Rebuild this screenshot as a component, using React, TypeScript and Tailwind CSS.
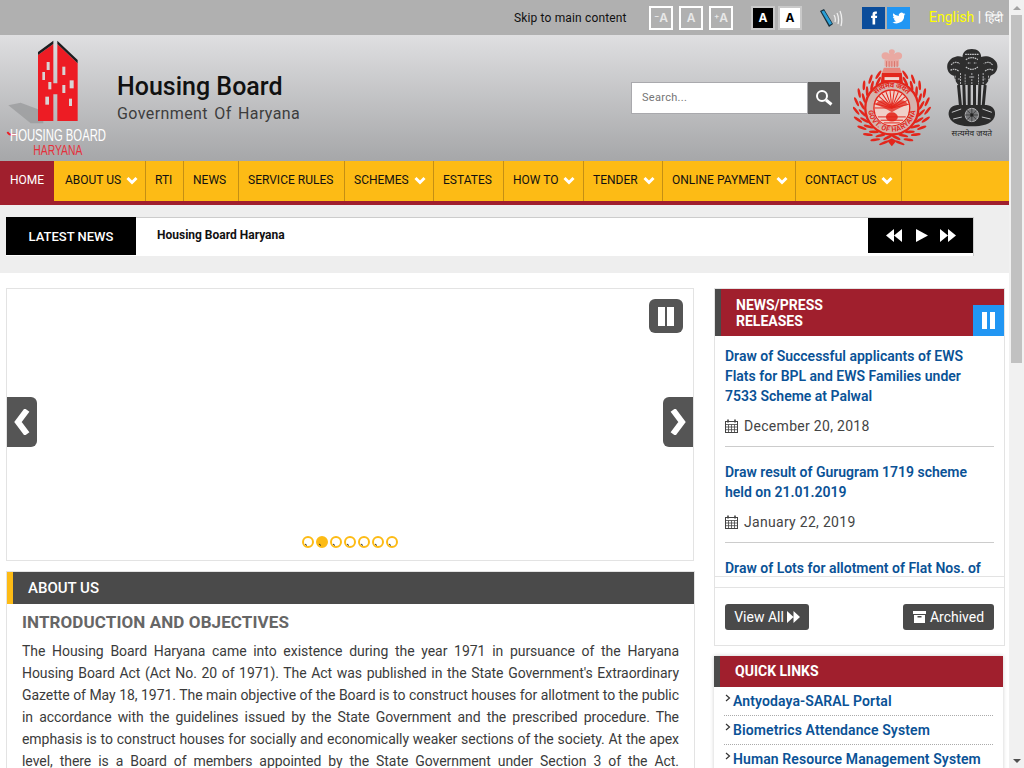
import React from 'react';

const menu = [
  { label: 'ABOUT US', w: 'w-[92px] pl-[11px]', sub: true },
  { label: 'RTI', w: 'w-[38px] pl-[9px]' },
  { label: 'NEWS', w: 'w-[55px] pl-[9px]' },
  { label: 'SERVICE RULES', w: 'w-[106px] pl-[9px]' },
  { label: 'SCHEMES', w: 'w-[89px] pl-[9px]', sub: true },
  { label: 'ESTATES', w: 'w-[70px] pl-[9px]' },
  { label: 'HOW TO', w: 'w-[80px] pl-[9px]', sub: true },
  { label: 'TENDER', w: 'w-[79px] pl-[9px]', sub: true },
  { label: 'ONLINE PAYMENT', w: 'w-[133px] pl-[9px]', sub: true },
  { label: 'CONTACT US', w: 'w-[106px] pl-[9px]', sub: true },
];

const Chevron = () => (
  <svg width="12" height="9" viewBox="0 0 12 9" className="ml-[5px] shrink-0">
    <path d="M1.500 2 L6 6.500 L10.500 2" fill="none" stroke="#fff" strokeWidth="3" />
  </svg>
);

// logo drawn in 3x units so it lines up with the crop of the reference
const Logo = () => (
  <svg width="115" height="125" viewBox="0 0 345 375">
    <polygon points="25,208 62,200 130,226 130,262 92,262" fill="#98999b" opacity="0.75" />
    <polygon points="114,57 160,24 160,142 172,142 172,24 233,82 233,255 172,255 172,175 160,175 160,255 114,255" fill="#ed1c24" />
    <path d="M114 48 L160 14 L160 24 L114 57 Z M172 14 L233 72 L233 82 L172 24 Z" fill="#1d1d1f" />
    {[[140, 78, 9, 24], [127, 108, 8, 24], [145, 138, 9, 22], [187, 92, 9, 25], [187, 147, 9, 24], [209, 133, 12, 24], [136, 182, 11, 24], [207, 188, 9, 22]].map(([x, y, w, h]) => (
      <rect key={x + y} x={x} y={y} width={w} height={h} fill="#d9d4d4" />
    ))}
    <path d="M22 288 Q28 298 38 296 L50 296" fill="none" stroke="#ed1c24" strokeWidth="5" />
    <text x="30" y="315" fontFamily="Liberation Sans, sans-serif" fontSize="50" fill="#fff" textLength="288" lengthAdjust="spacingAndGlyphs">HOUSING BOARD</text>
    <text x="100" y="357" fontFamily="Liberation Sans, sans-serif" fontSize="42" fill="#e5303a" textLength="147" lengthAdjust="spacingAndGlyphs">HARYANA</text>
  </svg>
);

const HaryanaEmblem = () => {
  const cx = 142;
  const cy = 205;
  const angles = Array.from({ length: 11 }, (_, i) => 8 + i * 14.5);
  const leaf = (a: number, side: number, r: number, key: string) => {
    const t = (a * Math.PI) / 180;
    const x = cx + side * r * Math.sin(t);
    const y = cy + r * Math.cos(t);
    return <ellipse key={key} cx={x} cy={y} rx="4" ry="15" fill="#e3261c" transform={`rotate(${side * (90 - a) + side * 35} ${x} ${y})`} />;
  };
  return (
    <svg width="78" height="98" viewBox="25 28 235 294">
      <g fill="#e9a9a2">
        <ellipse cx="142" cy="36" rx="9" ry="8" />
        <ellipse cx="123" cy="48" rx="12" ry="11" />
        <ellipse cx="161" cy="48" rx="12" ry="11" />
        <ellipse cx="142" cy="52" rx="15" ry="12" />
        <rect x="120" y="58" width="44" height="22" rx="4" />
      </g>
      <path d="M126 64 V82 M134 64 V82 M142 64 V82 M150 64 V82 M158 64 V82" stroke="#d9776e" strokeWidth="3" />
      <path d="M118 84 H166 L172 100 H112 Z" fill="#e8867c" />
      <path d="M112 100 H172 L176 136 H108 Z" fill="#e3261c" />
      <rect x="120" y="112" width="44" height="9" fill="#f0d5d0" />
      {angles.map(a => leaf(a, -1, 90, `a${a}`))}
      {angles.map(a => leaf(a, 1, 90, `b${a}`))}
      {angles.map(a => leaf(a + 5, -1, 108, `c${a}`))}
      {angles.map(a => leaf(a + 5, 1, 108, `d${a}`))}
      <path d="M142 320 L128 304 L142 296 L156 304 Z" fill="#e3261c" />
      <circle cx={cx} cy={cy} r="80" fill="#d5b3ad" stroke="#e3261c" strokeWidth="7" />
      <circle cx={cx} cy={cy} r="54" fill="#f0cfc8" stroke="#e3261c" strokeWidth="4" />
      {[0, 14, 28, 42, 56, 70, 84, 98, 112, 126, 140, 154, 168].map(d => (
        <path key={d} d="M142 205 L90 205" stroke="#e3261c" strokeWidth="3" transform={`rotate(${d} 142 205)`} />
      ))}
      <path d="M92 222 H192 Q180 256 142 258 Q104 256 92 222 Z" fill="#f0cfc8" />
      <path d="M100 232 H184 M108 242 H176 M118 250 H166" stroke="#e3261c" strokeWidth="3" />
      <ellipse cx="142" cy="232" rx="18" ry="14" fill="#e3261c" opacity="0.9" />
      <path d="M92 195 Q115 165 142 205 Q169 165 192 195 Q170 200 142 218 Q114 200 92 195 Z" fill="#e3261c" opacity="0.75" />
      <defs>
        <path id="hry-bottom" d="M76 205 A66 66 0 0 0 208 205" />
        <path id="hry-top" d="M74 205 A68 68 0 0 1 210 205" />
      </defs>
      <text fontSize="21" fontWeight="700" fill="#e3261c" fontFamily="Roboto, sans-serif">
        <textPath href="#hry-bottom" startOffset="50%" textAnchor="middle" dominantBaseline="middle">GOVT. OF HARYANA</textPath>
      </text>
      <text fontSize="22" fontWeight="700" fill="#e3261c" fontFamily="'Noto Sans', sans-serif">
        <textPath href="#hry-top" startOffset="50%" textAnchor="middle" dominantBaseline="middle">सत्यमेव जयते</textPath>
      </text>
    </svg>
  );
};

const IndiaEmblem = () => (
  <svg width="52" height="89" viewBox="303 28 155 267">
    {/* lions */}
    <path d="M380 28 C362 28 352 38 352 52 C340 46 318 50 308 70 C302 86 310 104 326 108 C330 122 334 130 340 136 L420 136 C428 128 432 120 436 108 C452 104 462 86 454 68 C444 50 420 46 408 52 C408 38 398 28 380 28 Z" fill="#2e2e2e" />
    <path d="M360 44 H400 M362 60 Q380 48 398 60 M362 82 Q380 96 398 82 M368 70 h8 M386 70 h8 M318 76 Q328 62 344 72 M442 76 Q432 62 416 72 M316 92 Q330 84 342 96 M444 92 Q430 84 418 96" fill="none" stroke="#c6c7c9" strokeWidth="3.500" strokeDasharray="5 2" />
    <path d="M330 108 V130 M346 100 V134 M360 104 V134 M380 100 V134 M400 104 V134 M414 100 V134 M430 108 V130 M372 112 h16 M338 118 h10 M412 118 h10" stroke="#c6c7c9" strokeWidth="2.500" strokeDasharray="6 3" />
    {/* legs */}
    <path d="M340 136 L346 200 M356 136 L358 200 M372 136 L372 200 M388 136 L388 200 M404 136 L402 200 M420 136 L414 200" stroke="#2a2a2a" strokeWidth="9" />
    {/* abacus */}
    <path d="M336 196 C316 198 306 214 312 232 C320 254 350 260 380 260 C410 260 440 254 448 232 C454 214 444 198 424 196 Z" fill="#2c2c2c" />
    <circle cx="380" cy="226" r="20" fill="#77787a" stroke="#c6c7c9" strokeWidth="2.500" />
    <circle cx="380" cy="226" r="5" fill="#222" />
    <path d="M380 206 V246 M360 226 H400 M366 212 L394 240 M394 212 L366 240" stroke="#222" strokeWidth="1.800" />
    <path d="M320 218 L348 208 M324 238 L350 232 M440 218 L412 208 M436 238 L410 232" stroke="#c6c7c9" strokeWidth="3" />
    <text x="380" y="288" fontSize="25" textAnchor="middle" fill="#222" fontFamily="'Noto Sans', sans-serif">सत्यमेव जयते</text>
  </svg>
);

const ABox = ({ prefix, dark, light }: { prefix?: string; dark?: boolean; light?: boolean }) => (
  <div
    className={`flex h-6 w-6 items-center justify-center border-2 text-[12px] font-['Inter',sans-serif] ${
      dark
        ? 'border-[#c9c9c9] bg-black font-bold text-white'
        : light
          ? 'border-[#c9c9c9] bg-white font-bold text-black'
          : 'border-white font-semibold text-[#e8e8e8]'
    }`}
  >
    {prefix && <span className="mb-[4px] text-[8px] leading-none">{prefix}</span>}
    A
  </div>
);

const PhoneWave = () => (
  <svg width="23" height="18" viewBox="0 0 23 18">
    <polygon points="0,2 4,0 13,15 9,18" fill="#17313f" />
    <polygon points="1.500,2.500 4,1.500 12,14.500 9.500,16" fill="#2a9fd6" />
    <path d="M14 6 Q16 9 15 13 M17 4 Q19.500 9 18 15 M20 2 Q23 9 21 17" fill="none" stroke="#eee" strokeWidth="1.300" />
  </svg>
);

const Social = ({ bg, path }: { bg: string; path: string }) => (
  <div className={`flex h-[22px] w-[23px] items-center justify-center ${bg}`}>
    <svg width="14" height="14" viewBox="0 0 24 24" fill="#fff"><path d={path} /></svg>
  </div>
);

const Calendar = () => (
  <svg width="13" height="14" viewBox="0 0 13 14" className="mr-[6px] shrink-0" fill="none" stroke="#444" strokeWidth="1">
    <rect x="0.500" y="2.500" width="12" height="11" />
    <path d="M0.500 5.500 H12.500 M0.500 8 H12.500 M0.500 10.700 H12.500 M3.500 5.500 V13.500 M6.500 5.500 V13.500 M9.500 5.500 V13.500" strokeWidth="0.800" />
    <path d="M3 0.500 V3.500 M10 0.500 V3.500" strokeWidth="1.600" />
  </svg>
);

const Dot = ({ on }: { on?: boolean }) => (
  <svg width="12" height="12" viewBox="0 0 12 12">
    <circle cx="6" cy="6" r="5" fill={on ? '#fdbb15' : '#fff'} stroke="#fdbb15" strokeWidth="2" />
    <path d="M3 8 L5 9.500" stroke="#333" strokeWidth="1" />
  </svg>
);

const news = [
  { title: 'Draw of Successful applicants of EWS Flats for BPL and EWS Families under 7533 Scheme at Palwal', date: 'December 20, 2018' },
  { title: 'Draw result of Gurugram 1719 scheme held on 21.01.2019', date: 'January 22, 2019' },
  { title: 'Draw of Lots for allotment of Flat Nos. of', date: '' },
];

const links = ['Antyodaya-SARAL Portal', 'Biometrics Attendance System', 'Human Resource Management System'];

export default function App() {
  return (
    <div className="flex h-[768px] w-[1024px] overflow-hidden bg-white font-['Roboto',sans-serif]">
      <div className="w-[1009px] shrink-0">
        {/* top strip */}
        <div className="flex h-[35px] items-center bg-[#b0b0b0] pl-[514px]">
          <span className="mt-[1px] w-[135px] shrink-0 text-[12px] tracking-[0.15px] text-[#111]">Skip to main content</span>
          <div className="flex gap-[6px]"><ABox prefix="−" /><ABox /><ABox prefix="+" /></div>
          <div className="ml-[18px] flex gap-[3px]"><ABox dark /><ABox light /></div>
          <div className="ml-[18px] w-[42px] shrink-0"><PhoneWave /></div>
          <div className="flex gap-[2px]">
            <Social bg="bg-[#0b4d9b]" path="M14 8V6c0-1 .5-1.500 1.500-1.500H17V1h-3c-3 0-4.500 2-4.500 4.500V8H7v4h2.500v11H14V12h3l.5-4z" />
            <Social bg="bg-[#2196f3]" path="M23 5c-.8.4-1.700.6-2.600.8.900-.6 1.600-1.400 2-2.500-.9.500-1.900.9-2.900 1.100A4.600 4.600 0 0 0 11.600 8.600 13 13 0 0 1 2.200 3.800a4.600 4.600 0 0 0 1.400 6.100c-.7 0-1.400-.2-2-.6 0 2.200 1.600 4.100 3.700 4.600-.7.200-1.400.2-2.100.1.600 1.800 2.300 3.200 4.300 3.200A9.300 9.300 0 0 1 .7 19.100 13 13 0 0 0 20.800 7.500c.9-.6 1.700-1.500 2.200-2.500z" />
          </div>
          <div className="mb-[1px] ml-[19px] whitespace-nowrap text-[14px] leading-none text-white">
            <span className="text-[#ffff00]">English</span> | <span className="text-[12px]">हिंदी</span>
          </div>
        </div>

        {/* header */}
        <div className="flex h-[126px] items-center bg-gradient-to-b from-[#dfdfe1] to-[#a6a7a9]">
          <div className="w-[117px] shrink-0"><Logo /></div>
          <div className="w-[514px] shrink-0">
            <div className="text-[25px] font-medium leading-[32px] text-[#111]">Housing Board</div>
            <div className="text-[16px] leading-[22px] tracking-[0.4px] text-[#3d3d3d] [word-spacing:2px]">Government Of Haryana</div>
          </div>
          <div className="flex">
            <div className="flex h-8 w-[177px] items-center border border-[#a9a9ad] bg-white pl-[10px] pt-[1px] text-[11px] tracking-[0.3px] text-[#757575]">Search...</div>
            <div className="flex h-8 w-8 items-center justify-center bg-[#5d5d5d]">
              <svg width="18" height="18" viewBox="0 0 18 18" fill="none" stroke="#fff">
                <circle cx="7" cy="7" r="5" strokeWidth="2" />
                <path d="M11 11 L16.500 15.500" strokeWidth="3" />
              </svg>
            </div>
          </div>
          <div className="ml-[13px]"><HaryanaEmblem /></div>
          <div className="mb-[9px] ml-[15px]"><IndiaEmblem /></div>
        </div>

        {/* nav */}
        <nav className="flex h-[44px] border-b-4 border-[#a01f2d] bg-[#fdbb15] text-[12px] text-[#111]">
          <div className="flex w-[54px] items-center justify-center bg-[#a01f2d] pb-[2px] text-white">HOME</div>
          {menu.map(m => (
            <div key={m.label} className={`flex items-center border-r border-[#c48f14] pb-[2px] ${m.w}`}>
              <span className="whitespace-nowrap">{m.label}</span>
              {m.sub && <Chevron />}
            </div>
          ))}
        </nav>

        {/* ticker */}
        <div className="h-[68px] bg-[#eeeeee] pl-[6px] pt-[12px]">
          <div className="flex h-[39px] w-[968px] border-t border-r border-[#cccccc] bg-white">
            <div className="-mt-px flex h-[38px] w-[130px] items-center justify-center bg-black pt-[1px] text-[13px] font-medium text-white">LATEST NEWS</div>
            <div className="flex-1 pl-[21px] text-[12px] font-bold leading-[34px] text-[#111]">Housing Board Haryana</div>
            <div className="flex h-[35px] w-[105px] items-center justify-center gap-[12px] bg-black">
              <svg width="16" height="13" viewBox="0 0 15 12" fill="#fff"><path d="M7.500 0 V12 L0 6 Z M15 0 V12 L7.500 6 Z" /></svg>
              <svg width="12" height="13" viewBox="0 0 12 13" fill="#fff" className="ml-[2px]"><path d="M0 0 L12 6.500 L0 13 Z" /></svg>
              <svg width="16" height="13" viewBox="0 0 15 12" fill="#fff"><path d="M0 0 V12 L7.500 6 Z M7.500 0 V12 L15 6 Z" /></svg>
            </div>
          </div>
        </div>

        {/* main */}
        <div className="flex pt-[15px]">
          <div className="ml-[6px] w-[689px]">
            <div className="relative h-[273px] w-[688px] border border-[#e3e3e3] bg-white">
              <div className="absolute right-[10px] top-[10px] flex h-[34px] w-[34px] items-center justify-center gap-[2px] rounded-md bg-[#555555]">
                <span className="h-[19px] w-[7px] bg-white" />
                <span className="h-[19px] w-[7px] bg-white" />
              </div>
              <div className="absolute left-0 top-[108px] flex h-[50px] w-[30px] items-center justify-center rounded-r-md bg-[#555555]">
                <svg width="18" height="26" viewBox="0 0 18 26"><path d="M14 1 L5 13 L14 25" fill="none" stroke="#fff" strokeWidth="6" /></svg>
              </div>
              <div className="absolute right-0 top-[108px] flex h-[50px] w-[30px] items-center justify-center rounded-l-md bg-[#555555]">
                <svg width="18" height="26" viewBox="0 0 18 26"><path d="M4 1 L13 13 L4 25" fill="none" stroke="#fff" strokeWidth="6" /></svg>
              </div>
              <div className="absolute bottom-[12px] left-[295px] flex gap-[2px]">
                {[0, 1, 2, 3, 4, 5, 6].map(i => <Dot key={i} on={i === 1} />)}
              </div>
            </div>

            <div className="mt-[10px] border-x border-t border-[#e3e3e3]">
              <div className="flex h-8 items-center border-l-[6px] border-[#fdbb15] bg-[#4a4a4a] pl-[15px] text-[15px] font-medium text-white">ABOUT US</div>
              <div className="px-[15px]">
                <h2 className="mt-[8px] text-[17px] font-bold leading-[20px] tracking-[0.1px] text-[#666666]">INTRODUCTION AND OBJECTIVES</h2>
                <p className="mt-[8px] text-justify text-[14px] leading-[22px] tracking-[-0.05px] text-[#3b3b3b]">
                  The Housing Board Haryana came into existence during the year 1971 in pursuance of the Haryana Housing Board Act (Act No. 20 of 1971). The Act was published in the State Government's Extraordinary Gazette of May 18, 1971. The main objective of the Board is to construct houses for allotment to the public in accordance with the guidelines issued by the State Government and the prescribed procedure. The emphasis is to construct houses for socially and economically weaker sections of the society. At the apex level, there is a Board of members appointed by the State Government under Section 3 of the Act. Chairman is the head of the Board and is assisted by the Chief Administrator.
                </p>
              </div>
            </div>
          </div>

          <div className="ml-[19px] w-[291px]">
            <div className="h-[358px] border border-[#e3e3e3]">
              <div className="relative flex h-[47px] items-center border-l-[6px] border-[#4a4a4a] bg-[#a01f2d] pl-[15px] text-[14px] font-bold leading-[16px] text-white">
                NEWS/PRESS<br />RELEASES
                <div className="absolute bottom-0 right-0 flex h-[31px] w-[31px] items-center justify-center gap-[3px] bg-[#2196f3]">
                  <span className="h-[17px] w-[5px] bg-white" />
                  <span className="h-[17px] w-[5px] bg-white" />
                </div>
              </div>
              <div className="h-[241px] overflow-hidden border-b border-[#e3e3e3] px-[10px] pt-[10px]">
                {news.map((n, i) => (
                  <div key={i} className={i < 2 ? 'mb-[15px] border-b border-[#cccccc] pb-[10px]' : ''}>
                    <div className="text-[14px] font-semibold leading-[20px] text-[#0a5296]">{n.title}</div>
                    {n.date && (
                      <div className="mt-[10px] flex h-5 items-center text-[14px] tracking-[0.3px] text-[#444444]">
                        <Calendar />{n.date}
                      </div>
                    )}
                  </div>
                ))}
              </div>
              <div className="mt-[10px] flex justify-between border-t border-[#e3e3e3] px-[10px] pt-[16px]">
                <div className="flex h-[26px] w-[84px] items-center justify-center rounded-[3px] bg-[#4a4a4a] text-[14px] text-white">
                  View All
                  <svg width="13" height="12" viewBox="0 0 13 12" fill="#fff" className="ml-[3px]"><path d="M0 0 V12 L6.500 6 Z M6.500 0 V12 L13 6 Z" /></svg>
                </div>
                <div className="flex h-[26px] w-[91px] items-center justify-center rounded-[3px] bg-[#4a4a4a] text-[14px] text-white">
                  <svg width="13" height="12" viewBox="0 0 13 12" fill="#fff" className="mr-[4px]"><path d="M0 0 H13 V3 H0 Z M1 4 H12 V12 H1 Z" /><rect x="4.500" y="5" width="4" height="1.500" fill="#4a4a4a" /></svg>
                  Archived
                </div>
              </div>
            </div>

            <div className="mt-[10px] w-[289px] shadow-[0_0_4px_rgba(0,0,0,0.2)]">
              <div className="flex h-[31px] items-center border-l-[6px] border-[#4a4a4a] bg-[#a01f2d] pl-[15px] text-[14px] font-bold text-white">QUICK LINKS</div>
              <div className="px-[10px]">
                {links.map(l => (
                  <div key={l} className="flex h-[29px] border-b border-dotted border-[#aaaaaa] pt-[5px]">
                    <svg width="8" height="8" viewBox="0 0 8 8" className="mr-[1px] mt-[2px] shrink-0"><path d="M2 1 L5.500 4 L2 7" fill="none" stroke="#333" strokeWidth="1.200" /></svg>
                    <span className="whitespace-nowrap text-[14px] font-semibold leading-[18px] tracking-[0.1px] text-[#0a5296]">{l}</span>
                  </div>
                ))}
              </div>
            </div>
          </div>
        </div>
      </div>

      {/* scrollbar */}
      <div className="flex h-[768px] w-[15px] shrink-0 flex-col items-center bg-[#f1f1f1]">
        <div className="flex h-[15px] items-center">
          <div className="h-0 w-0 border-x-[4px] border-b-[4px] border-x-transparent border-b-[#a3a3a3]" />
        </div>
        <div className="h-[348px] w-[11px] bg-[#c1c1c1]" />
        <div className="flex-1" />
        <div className="flex h-[15px] items-center">
          <div className="h-0 w-0 border-x-[4px] border-t-[4px] border-x-transparent border-t-[#505050]" />
        </div>
      </div>
    </div>
  );
}
